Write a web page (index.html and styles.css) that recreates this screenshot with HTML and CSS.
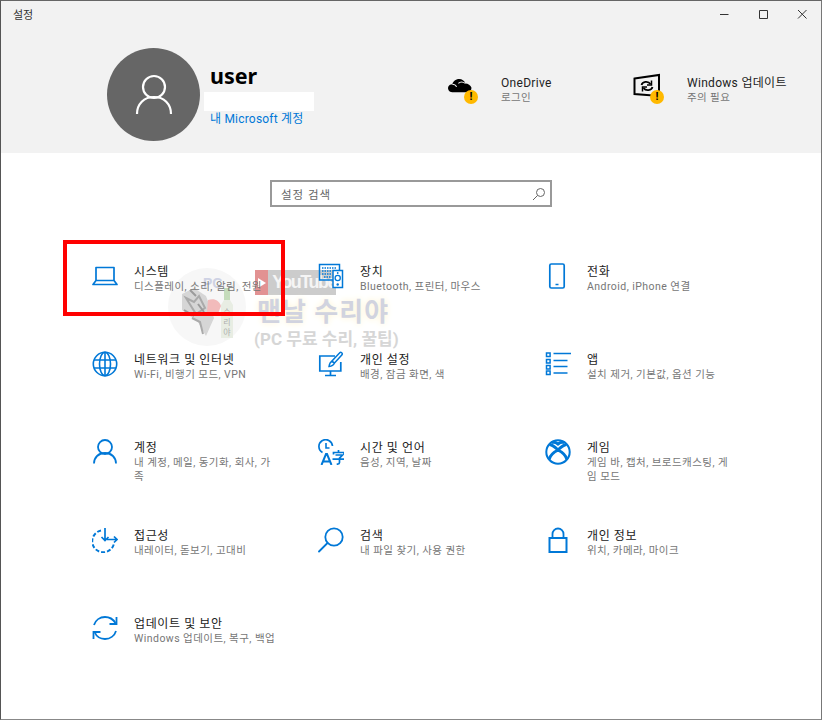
FILE: index.html
```html
<!DOCTYPE html>
<html lang="ko">
<head>
	<meta charset="utf-8">
	<title>설정</title>
	<link rel="stylesheet" href="styles.css">
</head>
<body>
<div class="window">
	<div class="top">
		<div class="titlebar">
			<span class="app-name">설정</span>
			<div class="controls">
				<svg class="ctl" width="14" height="14" viewBox="0 0 14 14"><path d="M3 7.500h8.500" stroke="#333" fill="none"/></svg>
				<svg class="ctl" width="14" height="14" viewBox="0 0 14 14"><path d="M3.500 3.500h8v8h-8z" stroke="#333" fill="none"/></svg>
				<svg class="ctl" width="14" height="14" viewBox="0 0 14 14"><path d="M3 3l8.500 8.500M11.500 3L3 11.500" stroke="#333" fill="none"/></svg>
			</div>
		</div>
		<div class="profile">
			<div class="avatar">
				<svg width="40" height="44" viewBox="0 0 40 44"><circle cx="20" cy="14" r="11" fill="none" stroke="#fff" stroke-width="2.200"/><path d="M3 41c0-10 7-17 17-17s17 7 17 17" fill="none" stroke="#fff" stroke-width="2.200"/></svg>
			</div>
			<div class="who">
				<div class="user-name">user</div>
				<div class="hidden-mail"></div>
				<div class="account-link">내 Microsoft 계정</div>
			</div>
			<div class="status status-drive">
				<div class="status-icon">
					<svg class="icon-cloud" width="28" height="28" viewBox="0 0 32 32"><path d="M2 21c-2-3 0-7 4-7 1-4 5-6 8-6 3 0 6 2 7 5 3 0 6 2 7 5 0 3-2 5-4 5H6c-2 0-3-1-4-2z" fill="#000"/><path d="M6 14c2 0 4 1 5 3M13 13c2-2 5-2 8 0" stroke="#f2f2f2" stroke-width="1.200" fill="none"/></svg>
					<span class="warn">!</span>
				</div>
				<div>
					<div class="status-name">OneDrive</div>
					<div class="status-sub">로그인</div>
				</div>
			</div>
			<div class="status status-update">
				<div class="status-icon">
					<svg class="icon-frame" width="32" height="32" viewBox="0 0 32 32"><path d="M2.500 6.500L27 3v21L2.500 22z" fill="none" stroke="#000" stroke-width="2"/><path d="M9.500 13c1-3.500 6.500-4.500 9-1M20.500 15c-1 3.500-6.500 4.500-9 1" fill="none" stroke="#000" stroke-width="1.800"/><path d="M19.500 8.500v4.500H15M10.500 19.500V15H15" fill="none" stroke="#000" stroke-width="1.500"/></svg>
					<span class="warn">!</span>
				</div>
				<div>
					<div class="status-name">Windows 업데이트</div>
					<div class="status-sub">주의 필요</div>
				</div>
			</div>
		</div>
	</div>

	<div class="search">
		<span>설정 검색</span>
		<svg width="14" height="14" viewBox="0 0 14 14"><circle cx="8.500" cy="5.500" r="4" fill="none" stroke="#666"/><path d="M5.500 8.500L1 13" stroke="#666" fill="none"/></svg>
	</div>

	<div class="grid">
		<div class="item">
			<svg class="ico" width="26" height="26" viewBox="0 0 26 26"><path d="M4 4.500h18v13H4zM4 17.500L1 21.500h24l-3-4" fill="none" stroke="#0078d7" stroke-width="1.700" stroke-linejoin="round"/></svg>
			<div class="text"><div class="name">시스템</div><div class="desc">디스플레이, 소리, 알림, 전원</div></div>
		</div>
		<div class="item">
			<svg class="ico" width="26" height="26" viewBox="0 0 26 26"><path d="M15 17H1.500V1.500h20V7" fill="none" stroke="#0078d7" stroke-width="1.500"/><path d="M4 5h14M4 8h9M4 11h9M6 14h7" stroke="#0078d7" stroke-width="1.600" stroke-dasharray="1.500 1"/><rect x="15" y="7.500" width="9.500" height="17" fill="#fff" stroke="#0078d7" stroke-width="1.500"/><circle cx="19.700" cy="15" r="2.600" fill="none" stroke="#0078d7" stroke-width="1.300"/><circle cx="19.700" cy="21.500" r="1.200" fill="#0078d7"/><circle cx="19.700" cy="10" r=".9" fill="#0078d7"/></svg>
			<div class="text"><div class="name">장치</div><div class="desc">Bluetooth, 프린터, 마우스</div></div>
		</div>
		<div class="item">
			<svg class="ico" width="26" height="26" viewBox="0 0 26 26"><rect x="4.800" y="1" width="14.400" height="24" rx="1.500" fill="none" stroke="#0078d7" stroke-width="1.700"/><path d="M10.500 21.500h3" stroke="#0078d7" stroke-width="1.500"/></svg>
			<div class="text"><div class="name">전화</div><div class="desc">Android, iPhone 연결</div></div>
		</div>

		<div class="item">
			<svg class="ico" width="26" height="26" viewBox="0 0 26 26"><g fill="none" stroke="#0078d7" stroke-width="1.600"><circle cx="13" cy="13" r="11.700"/><ellipse cx="13" cy="13" rx="5.500" ry="11.700"/><path d="M13 1.300v23.400M2 9h22M2 17h22"/></g></svg>
			<div class="text"><div class="name">네트워크 및 인터넷</div><div class="desc">Wi-Fi, 비행기 모드, VPN</div></div>
		</div>
		<div class="item">
			<svg class="ico" width="26" height="26" viewBox="0 0 26 26"><path d="M17 5H1.800v15h21V11M12.500 20v4M7 24.500h11" fill="none" stroke="#0078d7" stroke-width="1.700"/><path d="M23.500 1.500c1 .8 1 1.500.5 2.300l-7.500 8.200-2.500-2 7.500-8c.6-.7 1.300-1 2-.5zM14 10.500c-2 .5-2.500 2-3 5 2.500-.2 4.500-1 5.500-3.500z" fill="none" stroke="#0078d7" stroke-width="1.500"/></svg>
			<div class="text"><div class="name">개인 설정</div><div class="desc">배경, 잠금 화면, 색</div></div>
		</div>
		<div class="item">
			<svg class="ico" width="26" height="26" viewBox="0 0 26 26"><path d="M1.500 2h3.600v3.600H1.500zM1.500 8.500h3.600v3.600H1.500zM1.500 14.500h3.600v3.600H1.500zM1.500 20h3.600v3.600H1.500z" fill="none" stroke="#0078d7" stroke-width="1.500"/><path d="M8.500 2.500H26M8.500 9.500h14M8.500 15.500h14M8.500 22h14" stroke="#0078d7" stroke-width="1.500"/></svg>
			<div class="text"><div class="name">앱</div><div class="desc">설치 제거, 기본값, 옵션 기능</div></div>
		</div>

		<div class="item">
			<svg class="ico" width="26" height="26" viewBox="0 0 26 26"><circle cx="13" cy="8" r="7" fill="none" stroke="#0078d7" stroke-width="1.800"/><path d="M2 24.500c0-6 4.500-10.500 11-10.500s11 4.500 11 10.500" fill="none" stroke="#0078d7" stroke-width="1.800"/></svg>
			<div class="text"><div class="name">계정</div><div class="desc">내 계정, 메일, 동기화, 회사, 가족</div></div>
		</div>
		<div class="item">
			<svg class="ico" width="26" height="26" viewBox="0 0 26 26"><path d="M4.500 13.500A6.800 6.800 0 1 1 14.500 7" fill="none" stroke="#0078d7" stroke-width="1.700"/><path d="M8 4v5h3.500" fill="none" stroke="#0078d7" stroke-width="1.600"/><path d="M3.500 26L8 15h1L13.500 26M5.200 22.500h7" fill="none" stroke="#0078d7" stroke-width="2"/><path d="M20.500 11v2M15.500 15.500v-2h10.500v2M17.500 16h7l-3 3.200v4.300c0 1.200-1 1.700-2.800 1.700M14.500 20.200h12" fill="none" stroke="#0078d7" stroke-width="1.700"/></svg>
			<div class="text"><div class="name">시간 및 언어</div><div class="desc">음성, 지역, 날짜</div></div>
		</div>
		<div class="item">
			<svg class="ico" width="26" height="26" viewBox="0 0 26 26"><circle cx="13" cy="13" r="11.700" fill="none" stroke="#0078d7" stroke-width="2"/><path d="M4.500 5.500c3.500.5 6 3 8.500 5.500 2.500-2.500 5-5 8.500-5.500M4 20.500c1-3.500 5-7.500 9-9.500 4 2 8 6 9 9.500M7 3.500c2-.5 4 0 6 1.500 2-1.500 4-2 6-1.500" fill="none" stroke="#0078d7" stroke-width="3"/></svg>
			<div class="text"><div class="name">게임</div><div class="desc">게임 바, 캡처, 브로드캐스팅, 게임 모드</div></div>
		</div>

		<div class="item">
			<svg class="ico" width="26" height="26" viewBox="0 0 26 26"><path d="M9 3.500a11 11 0 1 0 13 13" fill="none" stroke="#0078d7" stroke-width="2" stroke-dasharray="4 2"/><path d="M13 1v12M9.500 10l3.500 3.500 3.500-3.500M15 12.500h10M22 9.500l3 3-3 3" fill="none" stroke="#0078d7" stroke-width="1.700"/></svg>
			<div class="text"><div class="name">접근성</div><div class="desc">내레이터, 돋보기, 고대비</div></div>
		</div>
		<div class="item">
			<svg class="ico" width="26" height="26" viewBox="0 0 26 26"><circle cx="16" cy="10" r="8.700" fill="none" stroke="#0078d7" stroke-width="1.800"/><path d="M9.500 16L1 24.500" stroke="#0078d7" stroke-width="1.800" stroke-linecap="round"/></svg>
			<div class="text"><div class="name">검색</div><div class="desc">내 파일 찾기, 사용 권한</div></div>
		</div>
		<div class="item">
			<svg class="ico" width="26" height="26" viewBox="0 0 26 26"><path d="M4.500 11h17v14h-17z" fill="none" stroke="#0078d7" stroke-width="2"/><path d="M7.500 11V7a5.500 5.500 0 0 1 11 0v4" fill="none" stroke="#0078d7" stroke-width="1.800"/></svg>
			<div class="text"><div class="name">개인 정보</div><div class="desc">위치, 카메라, 마이크</div></div>
		</div>

		<div class="item">
			<svg class="ico" width="26" height="26" viewBox="0 0 26 26"><path d="M2 10C3.500 5 8 2 13 2c4.500 0 8 2 10.500 6M2.500 17c2 4.500 6 7 10.500 7 5 0 9.500-3 11-8" fill="none" stroke="#0078d7" stroke-width="1.800"/><path d="M24.500 2v7h-7M1.500 24v-7h7" fill="none" stroke="#0078d7" stroke-width="1.800"/></svg>
			<div class="text"><div class="name">업데이트 및 보안</div><div class="desc">Windows 업데이트, 복구, 백업</div></div>
		</div>
	</div>

	<div class="watermark">
		<div class="wm-badge">
			<svg width="78" height="78" viewBox="0 0 78 78">
				<circle cx="39" cy="39" r="39" fill="#f6f6f6"/>
				<path d="M14 26l12-6 12 8 8 22-8 18-8-14-16-12z" fill="#cfcfcf"/>
				<path d="M18 30l8 4 5-6 6 12-9 6zM24 50l8 4 3 12" fill="none" stroke="#9c9c9c" stroke-width="2"/>
				<path d="M22 22l6 6M30 36l6 8M16 42l10 6" stroke="#8a8a8a" stroke-width="2"/>
				<path d="M40 32c6-2 11 0 13 6l-4 10-10-4z" fill="#f0b0b0"/>
				<path d="M56 20h6v12l3 5v33H53V37l3-5z" fill="#e4ebdf"/>
				<path d="M56 20h6v12h-6z" fill="#bcd6b0"/>
				<text class="wm-pc" x="35" y="20">PC</text>
				<text class="wm-bottle" x="59" y="47">수</text>
				<text class="wm-bottle" x="59" y="57">리</text>
				<text class="wm-bottle" x="59" y="67">야</text>
			</svg>
		</div>
		<div class="wm-yt"><span class="wm-play"><svg width="8" height="10" viewBox="0 0 8 10"><path d="M0 0l8 5-8 5z" fill="#fff"/></svg></span>YouTube</div>
		<div class="wm-title">맨날 수리야</div>
		<div class="wm-sub">(PC 무료 수리, 꿀팁)</div>
	</div>
	<div class="redbox"></div>
</div>
</body>
</html>
```

FILE: styles.css
```css
body{
	margin: 0;
	padding: 0;
	background: #fff;
	font-family: Roboto, "Noto Sans CJK KR", sans-serif;
}
.window{
	position: relative;
	box-sizing: border-box;
	width: 822px;
	height: 720px;
	border-top: 1px solid #666;
	border-right: 1px solid #777;
	border-left: 1px solid #555;
	border-bottom: 1px solid #888;
	overflow: hidden;
}

.top{
	height: 152px;
	background: #f2f2f2;
}
.titlebar{
	display: flex;
	justify-content: space-between;
	align-items: center;
	height: 26px;
	padding-left: 12px;
}
.app-name{
	font-size: 11px;
	color: #333;
}
.controls{
	display: flex;
	gap: 25px;
	padding-right: 12px;
}
.ctl{
	display: block;
}

.profile{
	display: flex;
	padding-left: 106px;
	padding-top: 21px;
}
.avatar{
	display: flex;
	align-items: center;
	justify-content: center;
	width: 93px;
	height: 93px;
	border-radius: 50%;
	background: #666;
}
.who{
	width: 237px;
	padding-left: 10px;
}
.user-name{
	margin-top: 16px;
	font-family: "Noto Sans", sans-serif;
	font-size: 21.500px;
	font-weight: 700;
	line-height: 24px;
	color: #000;
}
.hidden-mail{
	width: 110px;
	height: 19px;
	margin: 4px 0 0 -6px;
	background: #fff;
}
.account-link{
	font-size: 12px;
	line-height: 16px;
	letter-spacing: .2px;
	color: #0078d7;
}

.status{
	display: flex;
	margin-top: 27px;
}
.status-drive{
	width: 186px;
}
.status-icon{
	position: relative;
	width: 54px;
	height: 34px;
}
.icon-cloud{
	display: block;
	margin-top: -3px;
}
.icon-frame{
	display: block;
	margin: -3px 0 0 -1px;
}
.warn{
	position: absolute;
	left: 17px;
	top: 15px;
	width: 14px;
	height: 14px;
	border-radius: 50%;
	background: #ffb900;
	color: #000;
	font-size: 11px;
	font-weight: 700;
	line-height: 14px;
	text-align: center;
}
.status-name{
	font-size: 12px;
	line-height: 16px;
	letter-spacing: .3px;
	color: #222;
}
.status-sub{
	font-size: 10.500px;
	line-height: 14px;
	letter-spacing: .4px;
	color: #767676;
}

.search{
	display: flex;
	justify-content: space-between;
	align-items: center;
	box-sizing: border-box;
	width: 282px;
	height: 27px;
	margin: 27px auto 0;
	padding: 0 4px 0 9px;
	border: 2px solid #999;
	background: #fff;
	font-size: 11.500px;
	letter-spacing: 1px;
	color: #666;
}

.grid{
	position: relative;
	z-index: 1;
	display: grid;
	grid-template-columns: 226px 227px 227px;
	grid-auto-rows: 88px;
	margin: 57px 0 0 91px;
}
.item{
	display: flex;
	gap: 16px;
}
.ico{
	flex: 0 0 auto;
	margin-top: -1px;
}
.text{
	width: 142px;
}
.name{
	font-size: 12px;
	line-height: 16px;
	letter-spacing: .6px;
	color: #222;
}
.desc{
	font-size: 10.500px;
	line-height: 14px;
	letter-spacing: .45px;
	color: #767676;
}

.watermark{
	position: absolute;
	left: 167px;
	top: 267px;
	width: 250px;
	height: 84px;
	opacity: .85;
}
.wm-badge{
	position: absolute;
	left: 0;
	top: 0;
}
.wm-pc{
	font-family: "Liberation Sans", sans-serif;
	font-size: 14px;
	font-weight: 700;
	fill: #c6cbe0;
}
.wm-bottle{
	font-size: 8px;
	text-anchor: middle;
	fill: #a0a0a0;
}
.wm-yt{
	position: absolute;
	left: 87px;
	top: 2px;
	display: flex;
	align-items: center;
	gap: 4px;
	box-sizing: border-box;
	width: 81px;
	height: 25px;
	background: #c4c4c4;
	color: #f4f4f4;
	font-family: "Liberation Sans", sans-serif;
	font-size: 18px;
	font-weight: 700;
	letter-spacing: -1.500px;
	line-height: 25px;
}
.wm-play{
	display: flex;
	align-items: center;
	justify-content: center;
	width: 26px;
	height: 25px;
	background: #dd7f7f;
}
.wm-title{
	position: absolute;
	left: 89px;
	top: 29px;
	font-size: 26px;
	font-weight: 700;
	line-height: 30px;
	letter-spacing: 1px;
	white-space: nowrap;
	color: #c9ccda;
	text-shadow: 0 0 6px #fdf3c8;
}
.wm-sub{
	position: absolute;
	left: 86px;
	top: 60px;
	font-size: 17px;
	font-weight: 700;
	line-height: 22px;
	white-space: nowrap;
	color: #d0d0d0;
}

.redbox{
	position: absolute;
	z-index: 2;
	left: 62px;
	top: 239px;
	box-sizing: border-box;
	width: 222px;
	height: 76px;
	border: 4px solid #f00;
}
```
